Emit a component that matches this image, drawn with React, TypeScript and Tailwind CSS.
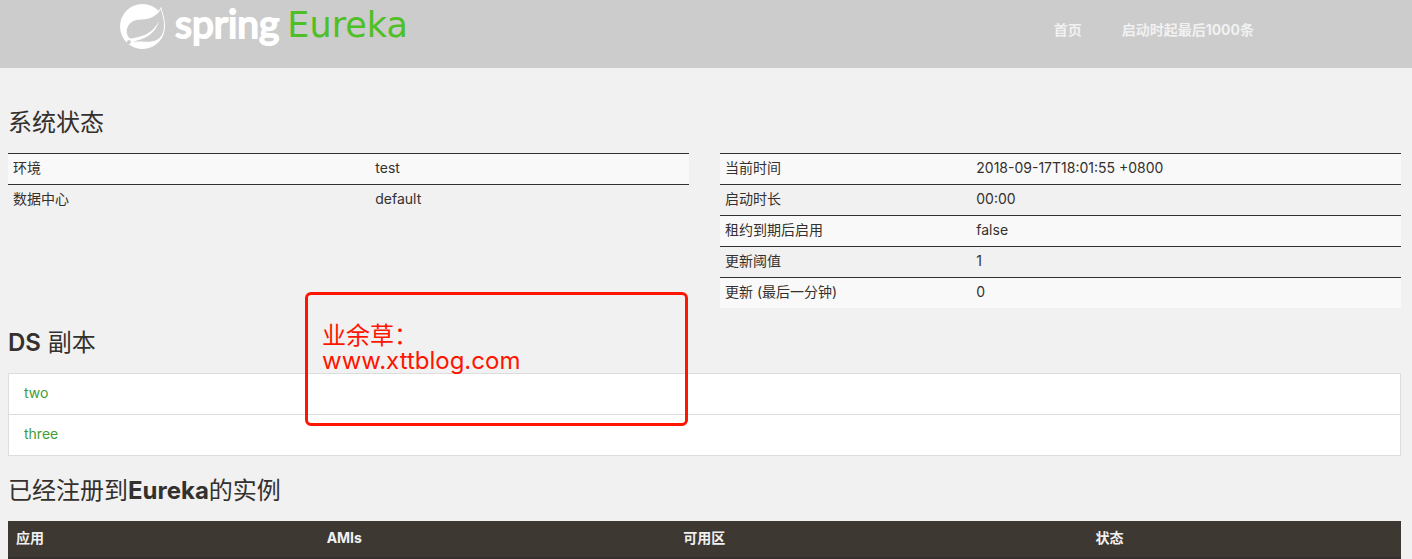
import React from "react";
import { SiSpring } from "react-icons/si";

type Row = [string, string];

const environment: Row[] = [
  ["环境", "test"],
  ["数据中心", "default"],
];

const runtime: Row[] = [
  ["当前时间", "2018-09-17T18:01:55 +0800"],
  ["启动时长", "00:00"],
  ["租约到期后启用", "false"],
  ["更新阈值", "1"],
  ["更新 (最后一分钟)", "0"],
];

const replicas = ["two", "three"];

function StatusTable({ rows, label, keyWidth }: { rows: Row[]; label: string; keyWidth: string }) {
  return (
    <table aria-label={label} className="w-full table-fixed border-collapse">
      <tbody>
        {rows.map(([name, value]) => (
          <tr key={name} className="border-t border-[#34302d] odd:bg-[#f9f9f9]">
            <td className={`${keyWidth} px-[5px] pt-1 pb-1.5 leading-5`}>{name}</td>
            <td className="px-[5px] pt-1 pb-1.5 leading-5">{value}</td>
          </tr>
        ))}
      </tbody>
    </table>
  );
}

function Heading({ children }: { children: React.ReactNode }) {
  return <h1 className="text-2xl leading-[26px]">{children}</h1>;
}

export default function App() {
  return (
    <div className="min-h-screen bg-[#f1f1f1] font-['Inter','Noto_Sans_CJK_SC',sans-serif] text-sm text-[#34302d]">
      <header className="bg-[#cccccc]">
        <div className="mx-auto flex h-17 max-w-[1172px] justify-between">
          <a href="#" className="flex items-start pt-1 text-white">
            <SiSpring className="size-[45px]" aria-hidden="true" />
            <span className="ml-[10px] font-['Lato',sans-serif] text-[39px] leading-[38px] [-webkit-text-stroke:2px_white]">spring</span>
            <span className="ml-2 font-['DejaVu_Sans',sans-serif] text-[35px] leading-[42px] text-[#4fbf26]">Eureka</span>
          </a>
          <nav className="flex gap-10 pt-5 pr-[38px] leading-5 font-bold text-[#f1f1f1]">
            <a href="#">首页</a>
            <a href="#">启动时起最后1000条</a>
          </nav>
        </div>
      </header>

      <main className="relative pt-[42px] pr-[11px] pl-2">
        <Heading>系统状态</Heading>
        <div className="mt-[17px] grid grid-cols-2 items-start gap-[31px]">
          <StatusTable rows={environment} label="环境" keyWidth="w-[53.2%]" />
          <StatusTable rows={runtime} label="系统状态" keyWidth="w-[36.9%]" />
        </div>

        <div className="mt-[22px]">
          <Heading>
            <span className="font-semibold">DS</span> 副本
          </Heading>
        </div>
        <ul className="mt-[17px] divide-y divide-[#dddddd] border border-[#dddddd] bg-white">
          {replicas.map((name) => (
            <li key={name} className="px-[15px] pt-[9px] pb-[11px] leading-5">
              <a href="#" className="text-[#3f9c35]">{name}</a>
            </li>
          ))}
        </ul>

        <div className="mt-[22px]">
          <Heading>
            已经注册到<span className="font-bold">Eureka</span>的实例
          </Heading>
        </div>
        <table className="mt-[17px] w-full table-fixed border-collapse bg-[#3e3833] text-left text-[#f1f1f1]">
          <thead>
            <tr className="border-b-2 border-[#34302d]">
              <th className="w-[22.3%] px-2 pt-[7px] pb-[9px] leading-5">应用</th>
              <th className="w-[25.6%] px-2 pt-[7px] pb-[9px] leading-5">AMIs</th>
              <th className="w-[29.6%] px-2 pt-[7px] pb-[9px] leading-5">可用区</th>
              <th className="px-2 pt-[7px] pb-[9px] leading-5">状态</th>
            </tr>
          </thead>
        </table>

        <div className="absolute top-[224px] left-[305px] h-[134px] w-[383px] rounded-md border-[3px] border-[#ff1500] px-[14px] pt-[28px] text-2xl leading-[26px] text-[#ff1500]">
          <p>业余草：</p>
          <p className="font-['Inter',sans-serif] leading-6">www.xttblog.com</p>
        </div>
      </main>
    </div>
  );
}
